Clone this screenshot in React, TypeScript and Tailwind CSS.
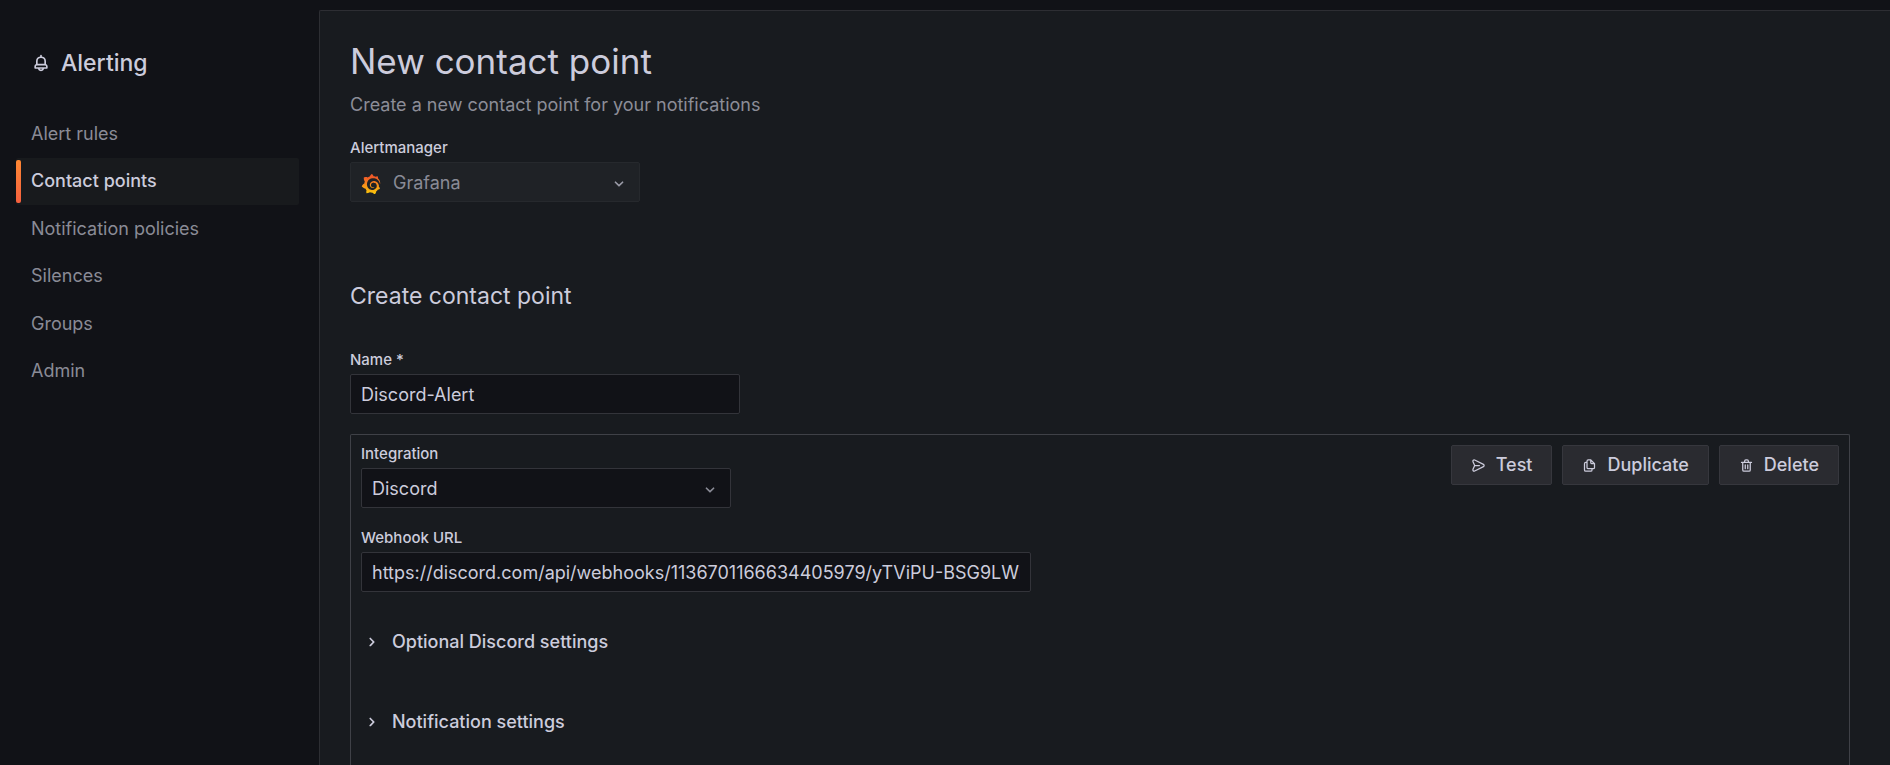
import React, { useState } from 'react';
import { SiGrafana } from 'react-icons/si';

const icons = {
  bell: 'M18,13.18V10a6,6,0,0,0-5-5.91V3a1,1,0,0,0-2,0V4.09A6,6,0,0,0,6,10v3.18A3,3,0,0,0,4,16v2a1,1,0,0,0,1,1H8.14a4,4,0,0,0,7.72,0H19a1,1,0,0,0,1-1V16A3,3,0,0,0,18,13.18ZM8,10a4,4,0,0,1,8,0v3H8Zm4,10a2,2,0,0,1-1.72-1h3.44A2,2,0,0,1,12,20Zm6-3H6V16a1,1,0,0,1,1-1H17a1,1,0,0,1,1,1Z',
  angleDown:
    'M17,9.17a1,1,0,0,0-1.41,0L12,12.71,8.46,9.17a1,1,0,0,0-1.41,0,1,1,0,0,0,0,1.42l4.24,4.24a1,1,0,0,0,1.42,0L17,10.59A1,1,0,0,0,17,9.17Z',
  angleRight:
    'M14.83,11.29,10.59,7.05a1,1,0,0,0-1.42,0,1,1,0,0,0,0,1.41L12.71,12,9.17,15.54a1,1,0,0,0,0,1.41,1,1,0,0,0,.71.29,1,1,0,0,0,.71-.29l4.24-4.24A1,1,0,0,0,14.83,11.29Z',
  copy: 'M21,8.94a1.31,1.31,0,0,0-.06-.27l0-.09a1.07,1.07,0,0,0-.19-.28h0l-6-6h0a1.07,1.07,0,0,0-.28-.19.32.32,0,0,0-.09,0A.88.88,0,0,0,14.05,2H10A3,3,0,0,0,7,5V6H6A3,3,0,0,0,3,9V19a3,3,0,0,0,3,3h8a3,3,0,0,0,3-3V18h1a3,3,0,0,0,3-3V9S21,9,21,8.94ZM15,5.41,17.59,8H16a1,1,0,0,1-1-1ZM15,19a1,1,0,0,1-1,1H6a1,1,0,0,1-1-1V9A1,1,0,0,1,6,8H7v7a3,3,0,0,0,3,3h5Zm4-4a1,1,0,0,1-1,1H10a1,1,0,0,1-1-1V5a1,1,0,0,1,1-1h3V7a3,3,0,0,0,3,3h3Z',
  trash:
    'M10,18a1,1,0,0,0,1-1V11a1,1,0,0,0-2,0v6A1,1,0,0,0,10,18ZM20,6H16V5a3,3,0,0,0-3-3H11A3,3,0,0,0,8,5V6H4A1,1,0,0,0,4,8H5V19a3,3,0,0,0,3,3h8a3,3,0,0,0,3-3V8h1a1,1,0,0,0,0-2ZM10,5a1,1,0,0,1,1-1h2a1,1,0,0,1,1,1V6H10Zm7,14a1,1,0,0,1-1,1H8a1,1,0,0,1-1-1V8H17Zm-3-1a1,1,0,0,0,1-1V11a1,1,0,0,0-2,0v6A1,1,0,0,0,14,18Z',
  send: 'M20.34,9.32l-14-7a3,3,0,0,0-4.08,3.9l2.4,5.37h0a1.06,1.06,0,0,1,0,.82l-2.4,5.37A3,3,0,0,0,5,22a3.14,3.14,0,0,0,1.35-.32l14-7a3,3,0,0,0,0-5.36Zm-.89,3.57-14,7a1,1,0,0,1-1.35-1.3l2.39-5.37A2,2,0,0,0,6.57,13h6.89a1,1,0,0,0,0-2H6.57a2,2,0,0,0-.08-.22L4.1,5.41a1,1,0,0,1,1.35-1.3l14,7a1,1,0,0,1,0,1.78Z',
};

function Icon({ name, className }: { name: keyof typeof icons; className: string }) {
  return (
    <svg viewBox="0 0 24 24" fill="currentColor" aria-hidden="true" className={className}>
      <path d={icons[name]} />
    </svg>
  );
}

const navItems = ['Alert rules', 'Contact points', 'Notification policies', 'Silences', 'Groups', 'Admin'];

function Sidebar() {
  return (
    <nav aria-label="Alerting" className="w-[319px] shrink-0 pt-[37px] pr-5 pl-4">
      <h2 className="flex h-8 items-center gap-2.5 pl-[15px] text-[23px] leading-8 font-medium">
        <Icon name="bell" className="size-5" />
        Alerting
      </h2>
      <ul className="mt-[31px] grid h-[285px] grid-rows-6">
        {navItems.map((item) => {
          const active = item === 'Contact points';
          return (
            <li key={item} className="flex">
              <a
                href="#"
                aria-current={active ? 'page' : undefined}
                className={
                  active
                    ? 'relative flex flex-1 items-center rounded-xs bg-[#181a1d] pl-[15px] font-medium before:absolute before:inset-y-0.5 before:left-0 before:w-[5px] before:rounded-xs before:bg-linear-to-b before:from-[#ff8833] before:to-[#f55f3e]'
                    : 'flex flex-1 items-center pl-[15px] text-[#8a8b96]'
                }
              >
                {item}
              </a>
            </li>
          );
        })}
      </ul>
    </nav>
  );
}

function Label({ htmlFor, children }: { htmlFor: string; children: React.ReactNode }) {
  return (
    <label htmlFor={htmlFor} className="block h-6 w-fit text-[15px] leading-5 font-medium">
      {children}
    </label>
  );
}

function ActionButton({ icon, children }: { icon: keyof typeof icons; children: string }) {
  return (
    <button
      type="button"
      className="flex h-10 items-center gap-2.5 rounded-xs border border-[#36373d] bg-[#2a2b30] px-[19px] font-medium"
    >
      <Icon name={icon} className="size-[15px]" />
      {children}
    </button>
  );
}

function Section({ children }: { children: string }) {
  return (
    <button type="button" aria-expanded="false" className="flex h-10 items-center gap-2.5 font-medium">
      <Icon name="angleRight" className="size-5" />
      {children}
    </button>
  );
}

export default function App() {
  const [name, setName] = useState('Discord-Alert');
  const [url, setUrl] = useState('https://discord.com/api/webhooks/1136701166634405979/yTViPU-BSG9LWhS');

  return (
    <div className="flex h-screen overflow-hidden bg-[#111217] pt-2.5 font-[Inter,sans-serif] text-[18px] leading-6 text-[#ccccdc]">
      <Sidebar />
      <main className="flex min-w-0 flex-1 flex-col rounded-tl-xs border-t border-l border-[#2d2e33] bg-[#181b1f] pt-[30px] pr-10 pl-[30px]">
        <h1 className="text-[35px] leading-10">New contact point</h1>
        <p className="mt-3 text-[#8c8d97]">Create a new contact point for your notifications</p>

        <div className="mt-[21px]">
          <Label htmlFor="alertmanager">Alertmanager</Label>
          <div className="relative w-[290px]">
            <select
              id="alertmanager"
              disabled
              className="block h-10 w-full appearance-none rounded-xs border border-[#26292d] bg-[#1f2226] pt-px pr-10 pl-[42px] text-[#8a8b96] opacity-100"
            >
              <option>Grafana</option>
            </select>
            <svg className="absolute size-0" aria-hidden="true">
              <defs>
                <linearGradient id="grafana-fill" x1="0" y1="0" x2="0" y2="1">
                  <stop offset="0.15" stopColor="#f05a28" />
                  <stop offset="1" stopColor="#fbca0a" />
                </linearGradient>
              </defs>
            </svg>
            <SiGrafana fill="url(#grafana-fill)" aria-hidden="true" className="pointer-events-none absolute top-3 left-[11px] size-5" />
            <Icon name="angleDown" className="pointer-events-none absolute top-3 right-[11px] size-5 text-[#9a9ba7]" />
          </div>
        </div>

        <h2 className="mt-20 text-[23px] leading-7">Create contact point</h2>

        <div className="mt-10">
          <Label htmlFor="name">Name *</Label>
          <input
            id="name"
            type="text"
            value={name}
            onChange={(e) => setName(e.target.value)}
            className="block h-10 w-[390px] rounded-xs border border-[#33343a] bg-[#111217] px-2.5"
          />
        </div>

        <section className="mt-5 flex flex-1 items-start justify-between rounded-t-xs border border-b-0 border-[#3f4147] px-2.5 pt-[9px]">
          <div>
            <Label htmlFor="integration">Integration</Label>
            <div className="relative w-[370px]">
              <select
                id="integration"
                className="block h-10 w-full appearance-none rounded-xs border border-[#33343a] bg-[#111217] pt-px pr-10 pl-2.5"
              >
                <option>Discord</option>
              </select>
              <Icon name="angleDown" className="pointer-events-none absolute top-3 right-[11px] size-5 text-[#8a8b96]" />
            </div>
            <div className="mt-5">
              <Label htmlFor="webhook">Webhook URL</Label>
              <input
                id="webhook"
                type="text"
                value={url}
                onChange={(e) => setUrl(e.target.value)}
                className="block h-10 w-[670px] rounded-xs border border-[#33343a] bg-[#111217] px-2.5"
              />
            </div>
            <div className="mt-[30px] flex flex-col gap-10 pl-px">
              <Section>Optional Discord settings</Section>
              <Section>Notification settings</Section>
            </div>
          </div>
          <div className="flex gap-2.5 pt-px">
            <ActionButton icon="send">Test</ActionButton>
            <ActionButton icon="copy">Duplicate</ActionButton>
            <ActionButton icon="trash">Delete</ActionButton>
          </div>
        </section>
      </main>
    </div>
  );
}
